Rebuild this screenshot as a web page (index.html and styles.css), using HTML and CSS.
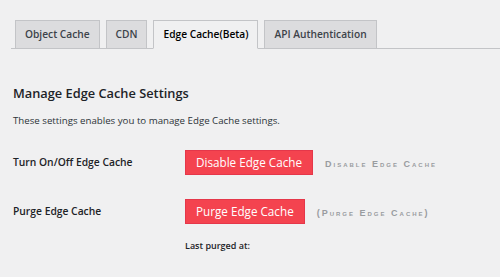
FILE: index.html
```html
<!DOCTYPE html>
<html lang="en">
<head>
    <meta charset="UTF-8">
    <meta name="viewport" content="width=device-width, initial-scale=1.0">
    <title>Edge Cache Settings</title>
    <link rel="stylesheet" href="styles.css">
</head>
<body>
    <div class="wrap">
        <nav class="nav-tab-wrapper">
            <a class="nav-tab" href="#">Object Cache</a>
            <a class="nav-tab" href="#">CDN</a>
            <a class="nav-tab nav-tab-active" href="#">Edge Cache(Beta)</a>
            <a class="nav-tab" href="#">API Authentication</a>
        </nav>

        <div class="section">
            <h2>Manage Edge Cache Settings</h2>
            <p class="description">These settings enables you to manage Edge Cache settings.</p>

            <div class="form-row">
                <div class="form-label">Turn On/Off Edge Cache</div>
                <div class="form-field">
                    <div class="field-line">
                        <button class="button-red">Disable Edge Cache</button>
                        <span class="status-text">Disable Edge Cache</span>
                    </div>
                </div>
            </div>

            <div class="form-row">
                <div class="form-label">Purge Edge Cache</div>
                <div class="form-field">
                    <div class="field-line">
                        <button class="button-red">Purge Edge Cache</button>
                        <span class="status-text">(Purge Edge Cache)</span>
                    </div>
                    <p class="last-purged">Last purged at:</p>
                </div>
            </div>
        </div>
    </div>
</body>
</html>
```

FILE: styles.css
```css
body {
    margin: 0;
    background: #f0f0f1;
    color: #1d2327;
    font-family: "Open Sans", "Noto Sans", sans-serif;
}

.wrap {
    padding: 20px 0 0 11px;
}

.nav-tab-wrapper {
    display: flex;
    gap: 6px;
    padding-left: 4px;
    border-bottom: 1px solid #c3c4c7;
}

.nav-tab {
    display: block;
    height: 27px;
    line-height: 27px;
    padding: 0 9px;
    margin-bottom: -1px;
    background: #dcdcde;
    border: 1px solid #c3c4c7;
    border-bottom: none;
    color: #3c434a;
    font-size: 10.2px;
    font-weight: 600;
    text-decoration: none;
    box-sizing: content-box;
}

.nav-tab-active {
    background: #f0f0f1;
    color: #000;
    border-bottom: 1px solid #f0f0f1;
}

.section {
    padding-left: 2px;
}

.section h2 {
    margin: 34px 0 0;
    font-size: 12.8px;
    font-weight: 600;
    line-height: 20px;
    color: #1d2327;
}

.description {
    margin: 11px 0 22px;
    font-size: 9.7px;
    line-height: 14px;
    color: #2c3338;
}

.form-row {
    display: flex;
    margin-bottom: 24px;
}

.form-label {
    width: 172px;
    padding-top: 5px;
    font-size: 10.3px;
    font-weight: 600;
    line-height: 14px;
}

.form-field {
    flex: 1;
}

.field-line {
    display: flex;
    align-items: center;
    gap: 12px;
}

.button-red {
    height: 25px;
    padding: 0 10px;
    background: #f4434f;
    border: 1px solid #e5374a;
    color: #fff;
    font-family: "Open Sans", "Noto Sans", sans-serif;
    font-size: 11.7px;
    line-height: 23px;
    cursor: pointer;
}

.status-text {
    font-family: "Liberation Sans", Arial, sans-serif;
    font-variant: small-caps;
    font-size: 9px;
    font-weight: 600;
    letter-spacing: 2px;
    color: #999ca0;
    padding-top: 2px;
}

.last-purged {
    margin: 15px 0 0;
    font-size: 9px;
    font-weight: 600;
    line-height: 14px;
}
```
